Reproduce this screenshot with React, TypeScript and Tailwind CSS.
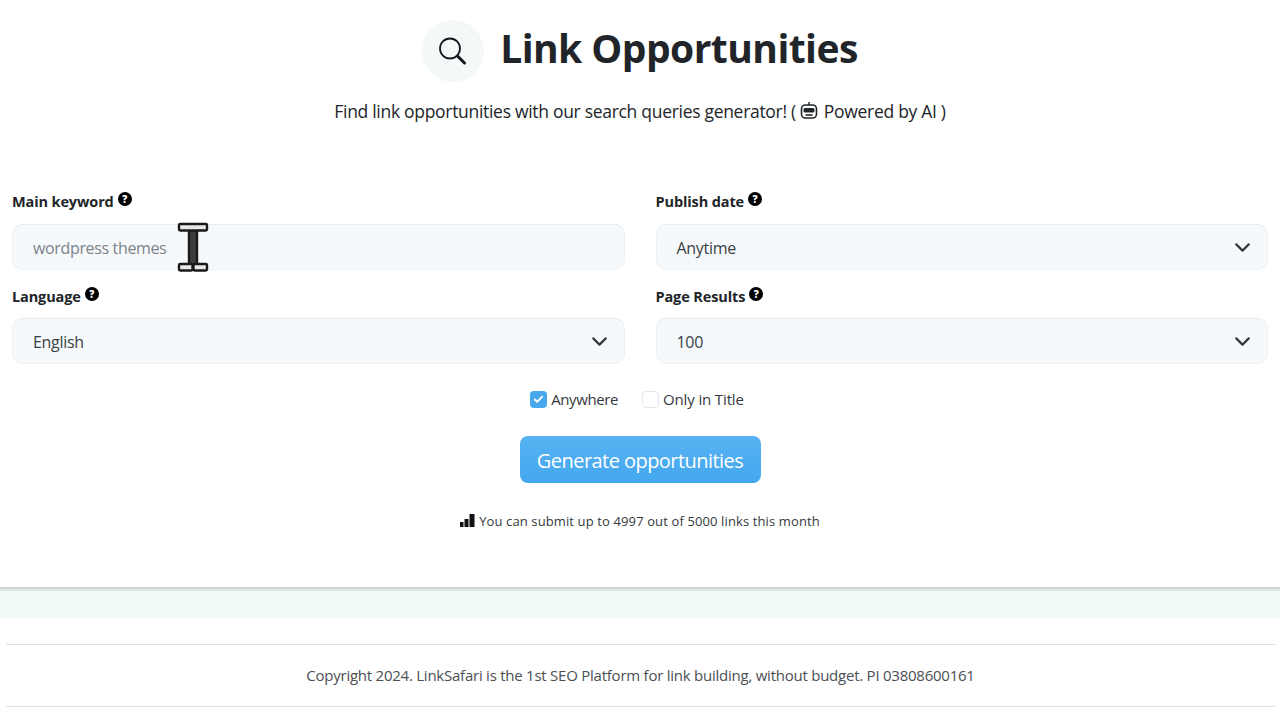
import React from 'react';
import { ChevronDown, Check } from 'lucide-react';

const font = { fontFamily: '"Open Sans", sans-serif' };

const HelpDot = () => (
  <span className="ml-[4px] mb-[5px] flex h-[14px] w-[14px] items-center justify-center rounded-full bg-black text-[10px] font-extrabold leading-none text-white">
    ?
  </span>
);

const Label = ({ text }: { text: string }) => (
  <div className="flex h-[25px] items-center text-[14.5px] font-bold tracking-[-0.12px] text-[#212529]">
    {text}
    <HelpDot />
  </div>
);

const Select = ({ value }: { value: string }) => (
  <div className="flex h-[46px] items-center justify-between rounded-[10px] border border-[#eef1f3] border-t-[#e8ebed] bg-[#f5f9fb] pl-[20px] pr-[12px] text-[16px] tracking-[-0.3px] text-[#3a3f44]">
    <span className="pt-[2px]">{value}</span>
    <ChevronDown size={25} strokeWidth={2.1} className="text-[#343a40]" />
  </div>
);

// text cursor sitting over the keyword input
const IBeam = () => (
  <svg width="32" height="50" viewBox="0 0 32 50" className="absolute left-[177px] top-[222px]">
    <rect x="12" y="8" width="8" height="35" fill="#3c3c3c" stroke="#1a1a1a" strokeWidth="2.4" />
    <rect x="2" y="2" width="28" height="6.5" rx="1.2" fill="#e8e8e8" stroke="#1a1a1a" strokeWidth="2.4" />
    <rect x="2" y="42" width="13.5" height="6.5" rx="1.2" fill="#e8e8e8" stroke="#1a1a1a" strokeWidth="2.4" />
    <rect x="16.5" y="42" width="13.5" height="6.5" rx="1.2" fill="#e8e8e8" stroke="#1a1a1a" strokeWidth="2.4" />
  </svg>
);

export default function App() {
  return (
    <div className="relative h-[720px] w-[1280px] overflow-hidden bg-white" style={font}>
      <IBeam />

      <div className="flex h-[187px] flex-col items-center pt-[14px]">
        <div className="flex h-[66px] items-center gap-[16px]">
          <div className="mt-[8px] flex h-[62px] w-[62px] items-center justify-center rounded-full bg-[#f4f8f9]">
            <svg width="32" height="32" viewBox="0 0 32 32" fill="none" stroke="#16191c" strokeLinecap="round" className="-translate-x-[1px]">
              <circle cx="14" cy="13.5" r="10" strokeWidth="1.8" />
              <path d="M21.5 21l7 7" strokeWidth="3" />
            </svg>
          </div>
          <h1 className="text-[39px] font-bold leading-none tracking-[-0.55px] text-[#212529]">Link Opportunities</h1>
        </div>
        <p className="mt-[18px] flex items-center text-[17.5px] leading-[26px] tracking-[-0.3px] text-[#212529]">
          Find link opportunities with our search queries generator! (
          <svg width="20" height="20" viewBox="0 0 20 20" className="ml-[3px] mr-[5px]">
            <path d="M10 1v3" stroke="#212529" strokeWidth="1.4" />
            <rect x="2.5" y="4" width="15" height="13" rx="4" fill="none" stroke="#212529" strokeWidth="1.6" />
            <rect x="4.5" y="7" width="11" height="4.5" rx="1.5" fill="#212529" />
            <path d="M6.5 14h7" stroke="#212529" strokeWidth="1.6" />
          </svg>
          Powered by AI )
        </p>
      </div>

      <div className="grid grid-cols-2 gap-x-[31px] px-[12px]">
        <div className="mt-[2px]">
          <Label text="Main keyword" />
          <div className="mt-[10px] flex h-[46px] items-center rounded-[10px] border border-[#eef1f3] border-t-[#e8ebed] bg-[#f5f9fb] pl-[20px] pt-[2px] text-[16px] tracking-[-0.35px] text-[#7d8388]">
            wordpress themes
          </div>
        </div>
        <div className="mt-[2px]">
          <Label text="Publish date" />
          <div className="mt-[10px]">
            <Select value="Anytime" />
          </div>
        </div>
        <div className="mt-[14px]">
          <Label text="Language" />
          <div className="mt-[9px]">
            <Select value="English" />
          </div>
        </div>
        <div className="mt-[14px]">
          <Label text="Page Results" />
          <div className="mt-[9px]">
            <Select value="100" />
          </div>
        </div>
      </div>

      <div className="mt-[25px] flex h-[20px] items-center justify-center pr-[6px] text-[15px] tracking-[-0.3px] text-[#343a40]">
        <span className="flex h-[17px] w-[17px] items-center justify-center rounded-[4px] bg-[#47a9ec]">
          <Check size={11} strokeWidth={4} className="text-white" />
        </span>
        <span className="ml-[4px] tracking-[-0.4px]">Anywhere</span>
        <span className="ml-[24px] h-[17px] w-[17px] rounded-[4px] border border-[#e3e6e9] bg-white" />
        <span className="ml-[4px] tracking-[-0.14px]">Only in Title</span>
      </div>

      <div className="mt-[27px] flex justify-center">
        <button className="h-[47px] w-[241px] rounded-[8px] bg-linear-to-b from-[#56b2f2] to-[#44a7ee] pt-[3px] text-[20px] tracking-[-0.55px] text-white">
          Generate opportunities
        </button>
      </div>

      <div className="mt-[28px] flex h-[20px] items-center justify-center pt-[2px] text-[13px] tracking-[0.12px] text-[#343a40]">
        <svg width="15" height="13" viewBox="0 0 15 13" className="mb-[3px] mr-[4px]" fill="#111">
          <rect x="0" y="8" width="3.5" height="5" />
          <rect x="4.5" y="5" width="4" height="8" />
          <rect x="9.5" y="0" width="5" height="13" />
        </svg>
        You can submit up to 4997 out of 5000 links this month
      </div>

      <div className="mt-[56px] h-[5px] bg-linear-to-b from-[#c9cccd] to-[#f2f9f9]" />
      <div className="h-[26px] bg-[#f2f9f9]" />

      <div className="ml-[6px] mr-[5px] mt-[26px] flex h-[63px] items-center justify-center border-y border-[#dfe2e4] text-[15px] tracking-[-0.24px] text-[#4a4f54]">
        Copyright 2024. LinkSafari is the 1st SEO Platform for link building, without budget. PI 03808600161
      </div>
    </div>
  );
}
